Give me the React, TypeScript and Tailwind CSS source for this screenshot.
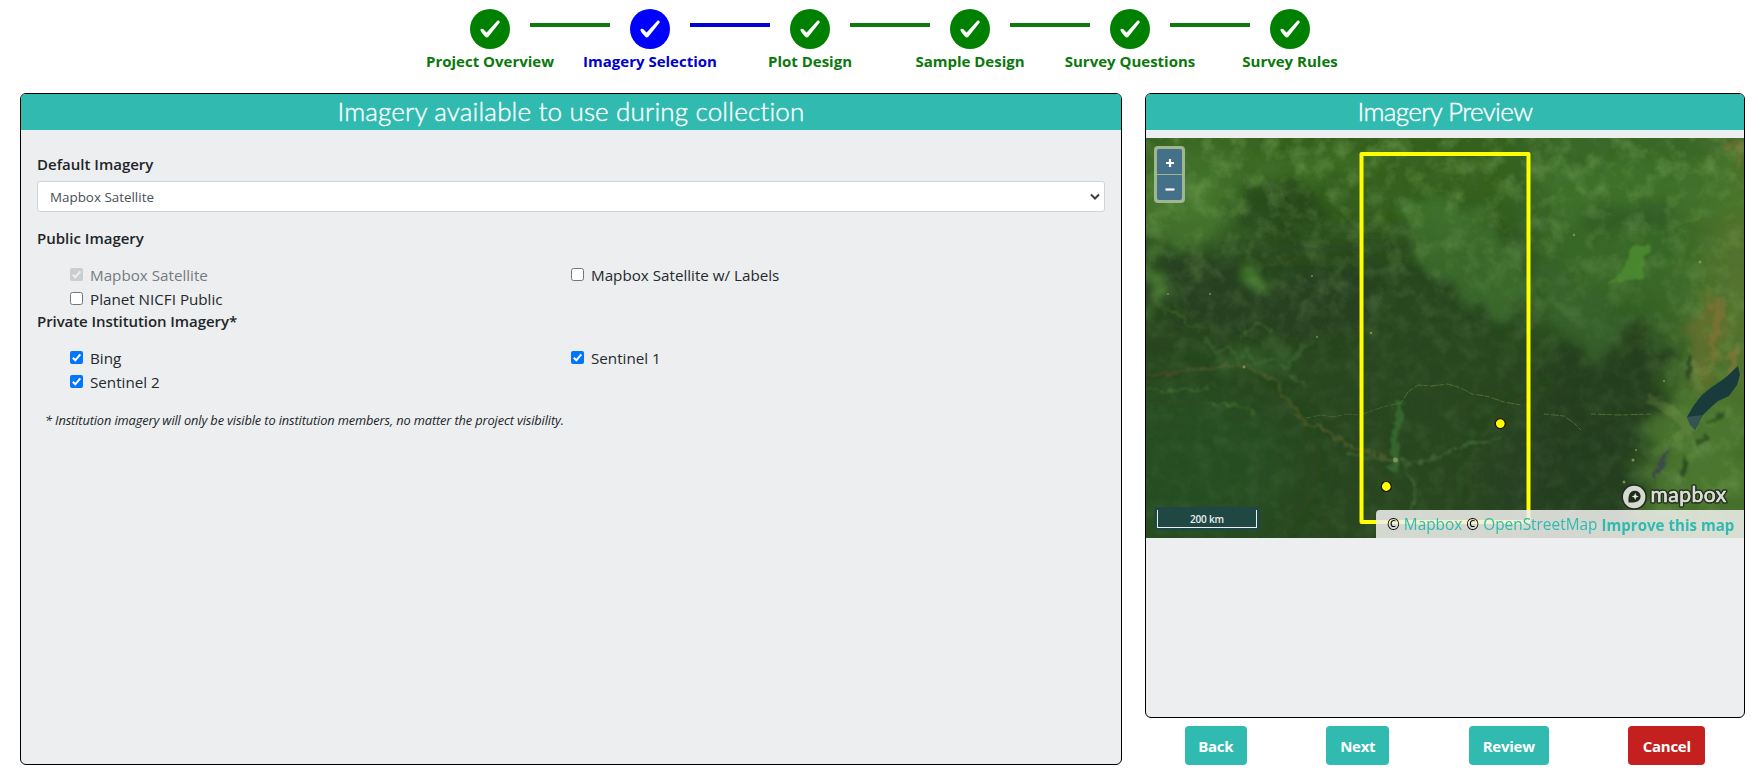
import type { ReactNode } from "react";

type Step = { label: string; active?: boolean };

const steps: Step[] = [
  { label: "Project Overview" },
  { label: "Imagery Selection", active: true },
  { label: "Plot Design" },
  { label: "Sample Design" },
  { label: "Survey Questions" },
  { label: "Survey Rules" },
];

function StepNode({ label, active, last }: Step & { last: boolean }) {
  return (
    <div className="flex w-40 shrink-0 flex-col items-center">
      <div className="relative flex w-full justify-center">
        <div
          className={
            active
              ? "flex size-10 items-center justify-center rounded-full bg-[#0000ff]"
              : "flex size-10 items-center justify-center rounded-full bg-[#008000]"
          }
        >
          <svg width="20" height="18" viewBox="0 0 20 18">
            <path
              d="M0.300 9.800 C0.800 8.600 2.400 8.300 3.400 9.200 L6.600 12.600 L17.200 0.900 C18.300 -0.100 20.200 0.900 19.700 2.600 L8.600 16.400 C7.600 17.700 6.200 17.800 5.100 16.600 C3 14.400 0.900 12 0.300 9.800 Z"
              fill="#fff"
            />
          </svg>
        </div>
        {!last && (
          <div
            className={
              active
                ? "absolute top-3.5 left-[120px] h-1 w-20 bg-[#0000d8]"
                : "absolute top-3.5 left-[120px] h-1 w-20 bg-[#107a10]"
            }
          />
        )}
      </div>
      <div
        className={
          active
            ? "text-[15px] leading-6 font-bold whitespace-nowrap text-[#0000cd]"
            : "text-[15px] leading-6 font-bold whitespace-nowrap text-[#0b780b]"
        }
      >
        {label}
      </div>
    </div>
  );
}

function Check({ label, checked, disabled }: { label: string; checked?: boolean; disabled?: boolean }) {
  const box = disabled
    ? "mb-px size-[13px] rounded-[2px] bg-[#cbcdcf]"
    : checked
      ? "mb-px size-[13px] rounded-[2px] bg-[#0075ff]"
      : "mb-px size-[13px] rounded-[2.5px] border border-[#767676] bg-white";
  return (
    <div className="flex h-6 w-[501px] items-center">
      <span className={box}>
        {checked && (
          <svg width="13" height="13" viewBox="0 0 13 13" fill="none" className="block">
            <path d="M2.8 6.8 L5.3 9.3 L10.3 3.3" stroke={disabled ? "#eceeef" : "#fff"} strokeWidth="2" />
          </svg>
        )}
      </span>
      <span
        className={
          disabled
            ? "ml-[7px] text-[15.2px] leading-6 text-[#757b80]"
            : "ml-[7px] text-[15.2px] leading-6 text-[#24292e]"
        }
      >
        {label}
      </span>
    </div>
  );
}

function Heading({ children }: { children: ReactNode }) {
  return (
    <div className="h-6 text-[15px] leading-6 font-semibold text-[#212529]">{children}</div>
  );
}

function Terrain() {
  return (
    <svg width="598" height="400" viewBox="0 0 598 400" className="block">
      <defs>
        <filter id="rough" x="-20%" y="-20%" width="140%" height="140%">
          <feTurbulence type="fractalNoise" baseFrequency="0.035" numOctaves="5" seed="8" result="n" />
          <feDisplacementMap in="SourceGraphic" in2="n" scale="50" xChannelSelector="R" yChannelSelector="G" result="d" />
          <feGaussianBlur in="d" stdDeviation="4.5" />
        </filter>
        <filter id="fine" x="-20%" y="-20%" width="140%" height="140%">
          <feTurbulence type="fractalNoise" baseFrequency="0.12" numOctaves="4" seed="3" result="n" />
          <feDisplacementMap in="SourceGraphic" in2="n" scale="11" xChannelSelector="R" yChannelSelector="G" result="d" />
          <feGaussianBlur in="d" stdDeviation="1.3" />
        </filter>
        <filter id="soft" x="-50%" y="-50%" width="200%" height="200%">
          <feGaussianBlur stdDeviation="22" />
        </filter>
        <filter id="mottleLight" x="0" y="0" width="100%" height="100%">
          <feTurbulence type="fractalNoise" baseFrequency="0.05" numOctaves="6" seed="21" />
          <feColorMatrix values="0 0 0 0 0.28  0 0 0 0 0.50  0 0 0 0 0.15  1.9 0 0 0 -0.85" />
        </filter>
        <filter id="mottleDark" x="0" y="0" width="100%" height="100%">
          <feTurbulence type="fractalNoise" baseFrequency="0.06" numOctaves="6" seed="5" />
          <feColorMatrix values="0 0 0 0 0.08  0 0 0 0 0.18  0 0 0 0 0.07  0 1.8 0 0 -0.8" />
        </filter>
        <linearGradient id="fade" x1="0" y1="0" x2="0" y2="1">
          <stop offset="0" stopColor="#fff" />
          <stop offset="0.4" stopColor="#888" />
          <stop offset="0.6" stopColor="#222" />
          <stop offset="1" stopColor="#1a1a1a" />
        </linearGradient>
        <mask id="upper">
          <rect width="598" height="400" fill="url(#fade)" />
          <path d="M520 200 L598 100 V400 H490 Z" fill="#ccc" filter="url(#soft)" />
        </mask>
      </defs>
      <rect width="598" height="400" fill="#28461f" />
      <g filter="url(#soft)">
        <rect x="-40" y="-60" width="680" height="155" fill="#35601f" />
        <rect x="380" y="-40" width="260" height="225" fill="#376726" />
        <path d="M540 130 H640 V440 H490 Z" fill="#44702c" />
        <ellipse cx="55" cy="55" rx="75" ry="50" fill="#437329" />
        <ellipse cx="592" cy="130" rx="26" ry="150" fill="#56762f" />
        <ellipse cx="130" cy="70" rx="45" ry="22" fill="#2b4f1c" />
        <ellipse cx="30" cy="330" rx="120" ry="80" fill="#284d20" />
        <ellipse cx="420" cy="340" rx="75" ry="70" fill="#263f24" />
      </g>
      <g filter="url(#rough)">
        <ellipse cx="30" cy="72" rx="42" ry="36" fill="#477b2e" opacity=".6" />
        <ellipse cx="170" cy="25" rx="65" ry="18" fill="#40702a" opacity=".6" />
        <ellipse cx="135" cy="70" rx="40" ry="27" fill="#28491c" opacity=".8" />
        <path d="M22 124 L85 126 L105 150 L210 118 L235 165 L205 200 L40 190 Z" fill="#253f1f" opacity=".8" />
        <path d="M82 132 L110 135 L128 155 L105 158 Z" fill="#44802d" opacity=".8" />
        <path d="M0 115 L16 120 L14 170 L0 175 Z" fill="#4a7a32" />
        <path d="M60 208 L95 200 L145 225 L130 242 L75 232 Z" fill="#38642c" opacity=".6" />
        <path d="M265 55 L310 70 L340 85 L390 130 L360 180 L320 160 L300 145 L262 128 Z" fill="#447a2f" opacity=".65" />
        <path d="M385 30 L598 20 V70 L420 90 Z" fill="#42772c" opacity=".5" />
        <path d="M395 130 L460 155 L500 205 L450 220 L405 190 Z" fill="#39612a" opacity=".8" />
        <ellipse cx="485" cy="80" rx="48" ry="20" fill="#315822" opacity=".65" />
        <path d="M405 225 L450 215 L490 195 L520 220 L516 262 L495 285 L480 370 L400 380 Z" fill="#263d1e" opacity=".9" />
        <path d="M555 155 L580 160 L572 215 L560 240 L540 245 Z" fill="#6c7030" opacity=".7" />
        <path d="M505 270 L550 255 L598 270 V355 L490 385 L500 340 L515 330 Z" fill="#50792e" opacity=".65" />
      </g>
      <g mask="url(#upper)">
        <rect width="598" height="400" filter="url(#mottleLight)" opacity=".5" />
      </g>
      <rect width="598" height="400" filter="url(#mottleDark)" opacity=".3" />
      <g filter="url(#fine)">
        <path d="M490 105 L504 108 L498 120 L497 141 L463 146 L478 132 L484 112 Z" fill="#4f9032" opacity=".75" />
        <path d="M562 170 L575 164 L571 190 L565 205 L571 225" stroke="#a0763b" strokeWidth="7" fill="none" opacity=".35" />
        <path d="M582 220 L590 212 L586 232 L578 245" stroke="#a77b3d" strokeWidth="6" fill="none" opacity=".4" />
        <path d="M578 10 L596 5 L592 30" stroke="#987039" strokeWidth="5" fill="none" opacity=".3" />
        <path d="M500 260 L530 275 L545 290 L528 302" stroke="#7d9944" strokeWidth="10" fill="none" opacity=".3" />
        <path d="M540 222 L546 215 L547 236 L540 242 Z M537 318 L544 325 L538 340 L534 334 Z" fill="#28441e" opacity=".8" />
        <path d="M562 285 L580 275 M548 305 L562 300" stroke="#2a481f" strokeWidth="4" opacity=".7" />
        <path d="M508 330 L524 306 L520 322 L508 344 Z" fill="#3b4b49" />
        <path d="M42 232 L60 230 L80 228 L100 228 L112 235 L130 243 L138 260 L150 272 L160 285 L175 290 L192 300 L200 308 L248 322" stroke="#5f6630" strokeWidth="2.5" fill="none" opacity=".6" />
        <path d="M0 239 L42 232" stroke="#694b2b" strokeWidth="3" opacity=".5" />
        <path d="M0 252 L60 251 M20 170 L45 188 L60 189 M60 265 L100 268 L110 278 M95 200 L112 184 L125 192" stroke="#4b7735" strokeWidth="1.6" fill="none" opacity=".7" />
        <path d="M58 200 L70 215 L85 208 L92 224 L100 210 L110 226 L130 220 L140 230 L160 205 M145 240 L162 248" stroke="#427339" strokeWidth="3" fill="none" opacity=".5" />
        <path d="M254 262 L253 285 L248 300 L250 322 L246 334" stroke="#3a7237" strokeWidth="7" fill="none" opacity=".7" />
        <path d="M200 315 L245 322 L275 325 L300 315 L330 304 L355 300 M258 326 L270 350 L265 370" stroke="#48713f" strokeWidth="2" fill="none" opacity=".7" />
      </g>
      <path
        d="M160 280 L175 277 L188 279 L200 276 L214 277 L228 272 L240 268 L255 265 L262 254 L272 247 L286 248 L302 246 L315 250 L326 256 L340 258 L358 264 L375 267 M398 276 L418 278 L428 285 L435 292 M445 276 L475 277 L505 276"
        stroke="#62793d"
        strokeWidth="1"
        strokeDasharray="5 2 8 1"
        fill="none"
        opacity=".5"
      />
      <path d="M541 279 L548 267 L557 256 L566 249 L579 240 L592 228 L594 237 L591 247 L583 258 L572 263 L565 269 L556 278 L549 292 L544 286 Z" fill="#193b3b" />
      <path d="M541 279 L556 277 L549 292 L544 287 Z" fill="#345454" />
      <g fill="#8fa05c" opacity=".8">
        <circle cx="249.500" cy="322" r="2.500" />
        <circle cx="98" cy="229" r="1.400" />
        <circle cx="554" cy="124" r="1.500" />
        <circle cx="428" cy="97" r="1.200" />
        <circle cx="490" cy="312" r="1.100" />
        <circle cx="487" cy="322" r="1.500" />
        <circle cx="478" cy="344" r="1.500" />
        <circle cx="518" cy="243" r="1.100" />
        <circle cx="171" cy="199" r="1" />
        <circle cx="166" cy="138" r="1" />
        <circle cx="225" cy="195" r="1.200" />
        <circle cx="64" cy="156" r="1" />
        <circle cx="22" cy="156" r="1" />
      </g>
      <rect x="215.500" y="16" width="167" height="368" fill="none" stroke="#ffff00" strokeWidth="4" strokeLinejoin="round" />
      <circle cx="354.300" cy="285.600" r="5" fill="#ffff00" stroke="#111" strokeWidth="1.200" />
      <circle cx="240.300" cy="348.500" r="5" fill="#ffff00" stroke="#111" strokeWidth="1.200" />
    </svg>
  );
}

function MapboxLogo() {
  return (
    <div className="absolute bottom-[26px] left-[475px]">
      <svg width="112" height="30" viewBox="0 0 112 30" className="block">
        <circle cx="13.200" cy="15" r="12.800" fill="#1f2c19" />
        <circle cx="13.200" cy="15" r="11.200" fill="#d5d9d1" />
        <path d="M7.600 20.400 C6.800 15 8.200 8.800 13.800 8.800 C17.400 8.800 19.600 11.400 19.600 14.400 C19.600 19.400 13.600 21.200 7.600 20.400 Z" fill="#1f2c19" />
        <path d="M14.200 10.800 L15.200 13.400 L17.700 14.400 L15.200 15.400 L14.200 18 L13.200 15.400 L10.700 14.400 L13.200 13.400 Z" fill="#e6e8e2" />
        <text
          x="29.500"
          y="20"
          fontFamily="Lato, sans-serif"
          fontSize="21"
          letterSpacing="0.5"
          fill="#d9ddd5"
          stroke="#26331f"
          strokeWidth="3.600"
          strokeLinejoin="round"
          paintOrder="stroke"
        >
          mapbox
        </text>
        <text
          aria-hidden="true"
          x="29.500"
          y="20"
          fontFamily="Lato, sans-serif"
          fontSize="21"
          letterSpacing="0.5"
          fill="#d9ddd5"
          stroke="#d9ddd5"
          strokeWidth="0.500"
        >
          mapbox
        </text>
      </svg>
    </div>
  );
}

function ActionButton({ label, className }: { label: string; className: string }) {
  return (
    <button
      className={
        "h-[39px] rounded-[4px] pt-px text-center text-[15px] leading-[39px] font-bold tracking-[-0.25px] text-white " +
        className
      }
    >
      {label}
    </button>
  );
}

export default function App() {
  return (
    <div className="flex h-[775px] w-[1761px] flex-col overflow-hidden bg-white font-['Open_Sans','Noto_Sans',sans-serif] text-[#212529]">
      <header className="flex h-[93px] shrink-0 pt-[9px] pl-[410px]">
        {steps.map((s, i) => (
          <StepNode key={s.label} label={s.label} active={s.active} last={i === steps.length - 1} />
        ))}
      </header>

      <main className="flex gap-[23px] pl-5">
        <section className="h-[672px] w-[1102px] overflow-hidden rounded-[6px] border border-black bg-[#eceeef]">
          <h2 className="h-9 bg-[#31bab0] text-center font-['Lato',sans-serif] text-[26px] leading-[35px] font-light tracking-[0.17px] text-white [-webkit-text-stroke:0.4px_#fff]">
            Imagery available to use during collection
          </h2>
          <div className="px-4 pt-[22px]">
            <Heading>Default Imagery</Heading>
            <div className="mt-[5px] flex h-[31px] items-center justify-between rounded-[3px] border border-[#ced4da] bg-white pr-1 pl-3">
              <span className="pt-px text-[13.4px] text-[#495057]">Mapbox Satellite</span>
              <svg width="10" height="8" viewBox="0 0 10 8" fill="none">
                <path d="M1 1.500 L5 5.500 L9 1.500" stroke="#3a3f44" strokeWidth="2" />
              </svg>
            </div>
            <div className="mt-3.5">
              <Heading>Public Imagery</Heading>
            </div>
            <div className="mt-[13px] flex flex-wrap pl-[33px]">
              <Check label="Mapbox Satellite" checked disabled />
              <Check label="Mapbox Satellite w/ Labels" />
              <Check label="Planet NICFI Public" />
            </div>
            <div className="-mt-0.5 tracking-[-0.07px]">
              <Heading>Private Institution Imagery*</Heading>
            </div>
            <div className="mt-[13px] flex flex-wrap pl-[33px]">
              <Check label="Bing" checked />
              <Check label="Sentinel 1" checked />
              <Check label="Sentinel 2" checked />
            </div>
            <p className="mt-4 pl-2 text-[12.8px] leading-5 tracking-[-0.12px] italic">
              * Institution imagery will only be visible to institution members, no matter the project visibility.
            </p>
          </div>
        </section>

        <div className="w-[600px]">
          <section className="h-[625px] w-[600px] overflow-hidden rounded-[6px] border border-black bg-[#eceeef]">
            <h2 className="h-9 bg-[#31bab0] text-center font-['Lato',sans-serif] text-[26px] leading-[35px] font-light tracking-[-0.62px] text-white [-webkit-text-stroke:0.4px_#fff]">
              Imagery Preview
            </h2>
            <div className="relative mt-2 h-[400px] w-[598px] overflow-hidden">
              <Terrain />
              <div className="absolute top-2 left-2 flex w-[31px] flex-col gap-px rounded-[4px] bg-[#a0b68f] p-[3px]">
                <button className="flex h-[25px] items-center justify-center rounded-t-[2px] bg-[#45708a] pt-[3px]">
                  <svg width="10" height="10" viewBox="0 0 10 10">
                    <path d="M1 5 H9 M5 1 V9" stroke="#fff" strokeWidth="2.200" />
                  </svg>
                </button>
                <button className="flex h-[25px] items-center justify-center rounded-b-[2px] bg-[#45708a] pt-0.5">
                  <svg width="10" height="10" viewBox="0 0 10 10">
                    <path d="M0.500 5.500 H9.500" stroke="#fff" strokeWidth="2.200" />
                  </svg>
                </button>
              </div>
              <div className="absolute bottom-2 left-2 rounded-[4px] bg-[#1f4844] p-0.5">
                <div className="mx-px mt-px h-[18px] w-[100px] border border-t-0 border-[#eee] text-center text-[10px] leading-[18px] font-semibold tracking-[-0.2px] text-[#eee]">
                  200 km
                </div>
              </div>
              <MapboxLogo />
              <div className="absolute right-0 bottom-0 flex h-7 w-[368px] items-center rounded-tl-[4px] bg-[rgb(240,240,238)]/86 pt-0.5 pl-[11px] text-[15.4px] whitespace-pre text-[#31bab0]">
                <span className="text-black">© </span>
                <span>Mapbox</span>
                <span className="text-black"> © </span>
                <span>OpenStreetMap </span>
                <span className="text-[15.1px] font-bold">Improve this map</span>
              </div>
            </div>
          </section>
          <div className="flex justify-around pt-2">
            <ActionButton label="Back" className="w-[62px] bg-[#31bab0]" />
            <ActionButton label="Next" className="w-[63px] bg-[#31bab0]" />
            <ActionButton label="Review" className="w-20 bg-[#31bab0]" />
            <ActionButton label="Cancel" className="w-[77px] bg-[#c52020]" />
          </div>
        </div>
      </main>
    </div>
  );
}
